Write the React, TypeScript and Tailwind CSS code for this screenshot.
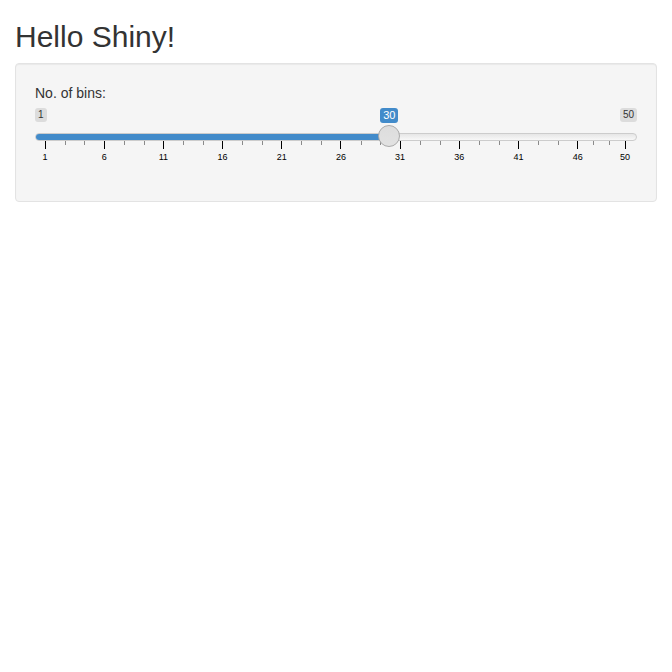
import React from 'react'

const min = 1
const max = 50
const value = 30

const majorTicks = [1, 6, 11, 16, 21, 26, 31, 36, 41, 46, 50]

const minorTicks = majorTicks.slice(0, -1).flatMap((tick, index) => {
  const next = majorTicks[index + 1]
  const step = (next - tick) / 3
  return [tick + step, tick + step * 2]
})

function pct(v: number) {
  return ((v - min) / (max - min)) * 100
}

function BinsSlider() {
  const p = pct(value)

  return (
    <div className="relative flex w-full flex-col pb-[6px]">
      {/* min / max labels */}
      <div className="flex h-[25px] items-start justify-between text-[10px] leading-[14px] text-[#333]">
        <span className="rounded-[3px] bg-[#dcdcdc] px-[3px]">{min}</span>
        <span className="rounded-[3px] bg-[#dcdcdc] px-[3px]">{max}</span>
      </div>

      {/* track with filled bar */}
      <div className="h-[8px] overflow-hidden rounded-full border border-[#cccccc] bg-gradient-to-b from-[#e6e6e6] to-[#f8f8f8]">
        <div className="-my-px h-[8px] bg-[#428bca]" style={{ width: `calc((100% - 22px) * ${p / 100} + 11px)` }} />
      </div>

      {/* grid */}
      <div className="relative ml-[10px] mr-[12px] h-[20px]">
        {minorTicks.map((tick) => (
          <div key={tick} className="absolute top-0 h-[4px] w-px bg-[#8a8a8a]" style={{ left: `${pct(tick)}%` }} />
        ))}
        {majorTicks.map((tick) => (
          <div key={tick} className="absolute top-0 flex w-0 flex-col items-center" style={{ left: `${pct(tick)}%` }}>
            <div className="h-[8px] w-px bg-black" />
            <span className="mt-[3px] text-[9px] leading-[10px] text-black">{tick}</span>
          </div>
        ))}
      </div>

      {/* handle and its value label sit over the track */}
      <div className="pointer-events-none absolute inset-y-0 left-0 right-[22px]">
        <div className="absolute top-0 flex w-[22px] flex-col items-center gap-[2px]" style={{ left: `${p}%` }}>
          <span className="rounded-[3px] bg-[#428bca] px-[3px] text-[11px] leading-[15px] text-white">{value}</span>
          <div className="h-[22px] w-[22px] rounded-full border border-[#aaaaaa] bg-gradient-to-b from-[#dddddd] to-[#e2e2e2]" />
        </div>
      </div>
    </div>
  )
}

export default function App() {
  return (
    <div className="min-h-screen bg-white px-[15px] font-['Liberation_Sans',Arial,sans-serif] text-[14px] leading-[20px] text-[#333]">
      <h2 className="mb-[10px] mt-[20px] text-[30px] leading-[33px] font-normal">Hello Shiny!</h2>
      <div className="rounded-[4px] border border-[#e3e3e3] bg-[#f5f5f5] p-[19px] shadow-[inset_0_1px_1px_rgba(0,0,0,0.05)]">
        <div className="mb-[15px]">
          <label className="mb-[5px] block">No. of bins:</label>
          <BinsSlider />
        </div>
      </div>
    </div>
  )
}
